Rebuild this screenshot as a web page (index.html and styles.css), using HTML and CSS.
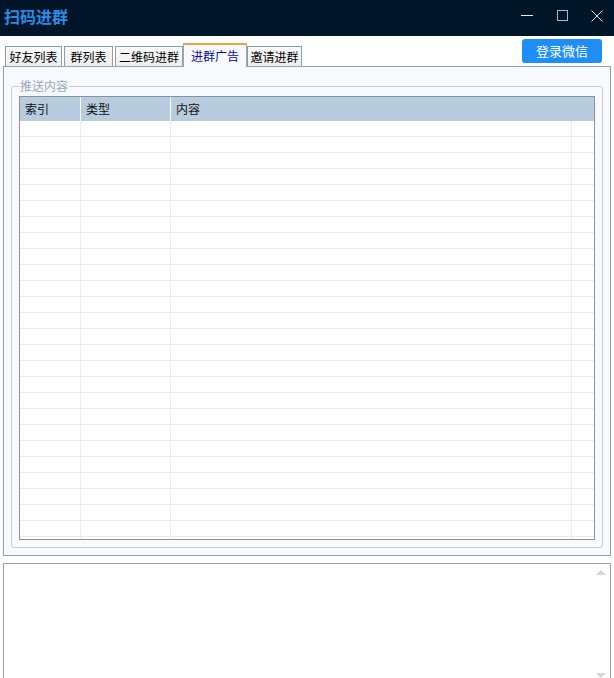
FILE: index.html
```html
<!DOCTYPE html>
<html lang="zh-CN">
<head>
<meta charset="utf-8">
<title>扫码进群</title>
<link rel="stylesheet" href="styles.css">
</head>
<body>
<div class="window">
  <div class="titlebar">
    <div class="title">扫码进群</div>
    <div class="controls">
      <div class="ctl"><svg width="12" height="12" viewBox="0 0 12 12"><line x1="0" y1="5.5" x2="12" y2="5.5" stroke="#e6eaf0" stroke-width="1"/></svg></div>
      <div class="ctl"><svg width="12" height="12" viewBox="0 0 12 12"><rect x="1.5" y="0.5" width="10" height="10" fill="none" stroke="#9fb8dc" stroke-width="1"/></svg></div>
      <div class="ctl"><svg width="12" height="12" viewBox="0 0 12 12"><path d="M0.5 0.5 L11.5 11.5 M11.5 0.5 L0.5 11.5" stroke="#d6dde6" stroke-width="1" fill="none"/></svg></div>
    </div>
  </div>
  <div class="content">
    <div class="toprow">
      <div class="tabs">
        <div class="tab t1">好友列表</div>
        <div class="tab t2">群列表</div>
        <div class="tab t3">二维码进群</div>
        <div class="tab active">进群广告</div>
        <div class="tab t5">邀请进群</div>
      </div>
      <button class="login">登录微信</button>
    </div>
    <div class="panel">
      <fieldset class="group">
        <legend>推送内容</legend>
        <div class="grid">
          <div class="thead">
            <div class="th">索引</div>
            <div class="th">类型</div>
            <div class="th">内容</div>
          </div>
          <div class="tbody">
            <div class="tr"><div></div><div></div><div></div><div></div></div>
            <div class="tr"><div></div><div></div><div></div><div></div></div>
            <div class="tr"><div></div><div></div><div></div><div></div></div>
            <div class="tr"><div></div><div></div><div></div><div></div></div>
            <div class="tr"><div></div><div></div><div></div><div></div></div>
            <div class="tr"><div></div><div></div><div></div><div></div></div>
            <div class="tr"><div></div><div></div><div></div><div></div></div>
            <div class="tr"><div></div><div></div><div></div><div></div></div>
            <div class="tr"><div></div><div></div><div></div><div></div></div>
            <div class="tr"><div></div><div></div><div></div><div></div></div>
            <div class="tr"><div></div><div></div><div></div><div></div></div>
            <div class="tr"><div></div><div></div><div></div><div></div></div>
            <div class="tr"><div></div><div></div><div></div><div></div></div>
            <div class="tr"><div></div><div></div><div></div><div></div></div>
            <div class="tr"><div></div><div></div><div></div><div></div></div>
            <div class="tr"><div></div><div></div><div></div><div></div></div>
            <div class="tr"><div></div><div></div><div></div><div></div></div>
            <div class="tr"><div></div><div></div><div></div><div></div></div>
            <div class="tr"><div></div><div></div><div></div><div></div></div>
            <div class="tr"><div></div><div></div><div></div><div></div></div>
            <div class="tr"><div></div><div></div><div></div><div></div></div>
            <div class="tr"><div></div><div></div><div></div><div></div></div>
            <div class="tr"><div></div><div></div><div></div><div></div></div>
            <div class="tr"><div></div><div></div><div></div><div></div></div>
            <div class="tr"><div></div><div></div><div></div><div></div></div>
            <div class="tr"><div></div><div></div><div></div><div></div></div>
            <div class="tr"><div></div><div></div><div></div><div></div></div>
          </div>
        </div>
      </fieldset>
    </div>
    <div class="log">
      <div class="log-body"></div>
      <div class="vscroll">
        <span class="arr up"></span>
        <span class="arr down"></span>
      </div>
    </div>
  </div>
</div>
</body>
</html>
```
FILE: styles.css
```css
* { box-sizing: border-box; }
html, body {
  margin: 0;
  padding: 0;
  width: 614px;
  height: 678px;
  overflow: hidden;
  background: #ffffff;
  font-family: "Noto Sans CJK SC", "Noto Sans", sans-serif;
  font-size: 12px;
  color: #000;
}
.window { width: 614px; height: 678px; display: flex; flex-direction: column; }

.titlebar {
  height: 36px;
  flex: none;
  background: #011528;
  display: flex;
  align-items: flex-start;
  justify-content: space-between;
}
.title {
  padding: 6px 0 0 4px;
  font-size: 16px;
  line-height: 20px;
  font-weight: bold;
  color: #2a8ce8;
  letter-spacing: 0;
}
.controls { display: flex; }
.ctl {
  width: 35px;
  height: 31px;
  display: flex;
  align-items: center;
  justify-content: center;
}
.ctl svg { display: block; }

.content { padding: 0 3px; flex: 1; display: flex; flex-direction: column; }

.toprow {
  height: 30px;
  flex: none;
  display: flex;
  justify-content: space-between;
  align-items: flex-end;
}
.tabs { display: flex; align-items: flex-end; padding-left: 2px; }
.tab {
  height: 20px;
  border: 1px solid #8c9ea8;
  border-bottom: none;
  background: linear-gradient(#fafafa, #eeeeee);
  line-height: 19px;
  text-align: center;
  font-size: 12px;
  color: #000;
  white-space: nowrap;
}
.t1 { width: 57px; margin-right: 2px; }
.t2 { width: 49px; margin-right: 2px; }
.t3 { width: 68px; }
.t5 { width: 55px; }
.tab.active {
  width: 64px;
  height: 24px;
  margin-bottom: -1px;
  position: relative;
  z-index: 1;
  background: #f8f9fd;
  border-top: 2px solid #e9a53c;
  color: #0a0aa8;
  line-height: 22px;
  border-left-color: #9aa9b2;
  border-right-color: #9aa9b2;
}
.login {
  align-self: flex-start;
  margin: 3px 9px 0 0;
  width: 80px;
  height: 24px;
  border: none;
  border-radius: 3px;
  background: #1f8ff7;
  color: #ffffff;
  font-family: "Noto Sans CJK SC", "Noto Sans", sans-serif;
  font-size: 13px;
  line-height: 24px;
  padding: 0;
}

.panel {
  height: 490px;
  flex: none;
  border: 1px solid #8fa3ad;
  background: #f8f9fd;
  display: flex;
  flex-direction: column;
}
.group {
  margin: 12px 7px 7px 7px;
  padding: 3px 7px 7px 7px;
  border: 1px solid #c9cdd2;
  border-radius: 3px;
  min-width: 0;
}
.group legend {
  margin-left: 0;
  padding: 0 1px;
  font-size: 12px;
  line-height: 14px;
  color: #95a8bd;
}
.grid {
  height: 444px;
  border: 1px solid #8d9094;
  background: #ffffff;
  overflow: hidden;
}
.thead {
  height: 24px;
  background: #b8cce0;
  display: grid;
  grid-template-columns: 61px 90px 1fr;
}
.th {
  border-right: 1px solid #ffffff;
  padding-left: 5px;
  line-height: 23px;
  font-size: 12px;
  color: #111;
}
.th:last-child { border-right: none; }
.tr {
  height: 16px;
  display: grid;
  grid-template-columns: 61px 90px 401px 1fr;
  border-bottom: 1px solid #ececec;
}
.tr > div { border-right: 1px solid #ececec; }
.tr > div:last-child { border-right: none; }

.log {
  margin-top: 7px;
  height: 124px;
  flex: none;
  border: 1px solid #a0a0a0;
  background: #ffffff;
  display: flex;
}
.log-body { flex: 1; }
.vscroll {
  width: 14px;
  margin-right: 2px;
  display: flex;
  flex-direction: column;
  justify-content: space-between;
  align-items: center;
  padding: 6px 0 8px;
}
.arr {
  width: 0;
  height: 0;
  border-left: 5px solid transparent;
  border-right: 5px solid transparent;
}
.arr.up { border-bottom: 5px solid #d6d6d6; }
.arr.down { border-top: 5px solid #d6d6d6; }
```
